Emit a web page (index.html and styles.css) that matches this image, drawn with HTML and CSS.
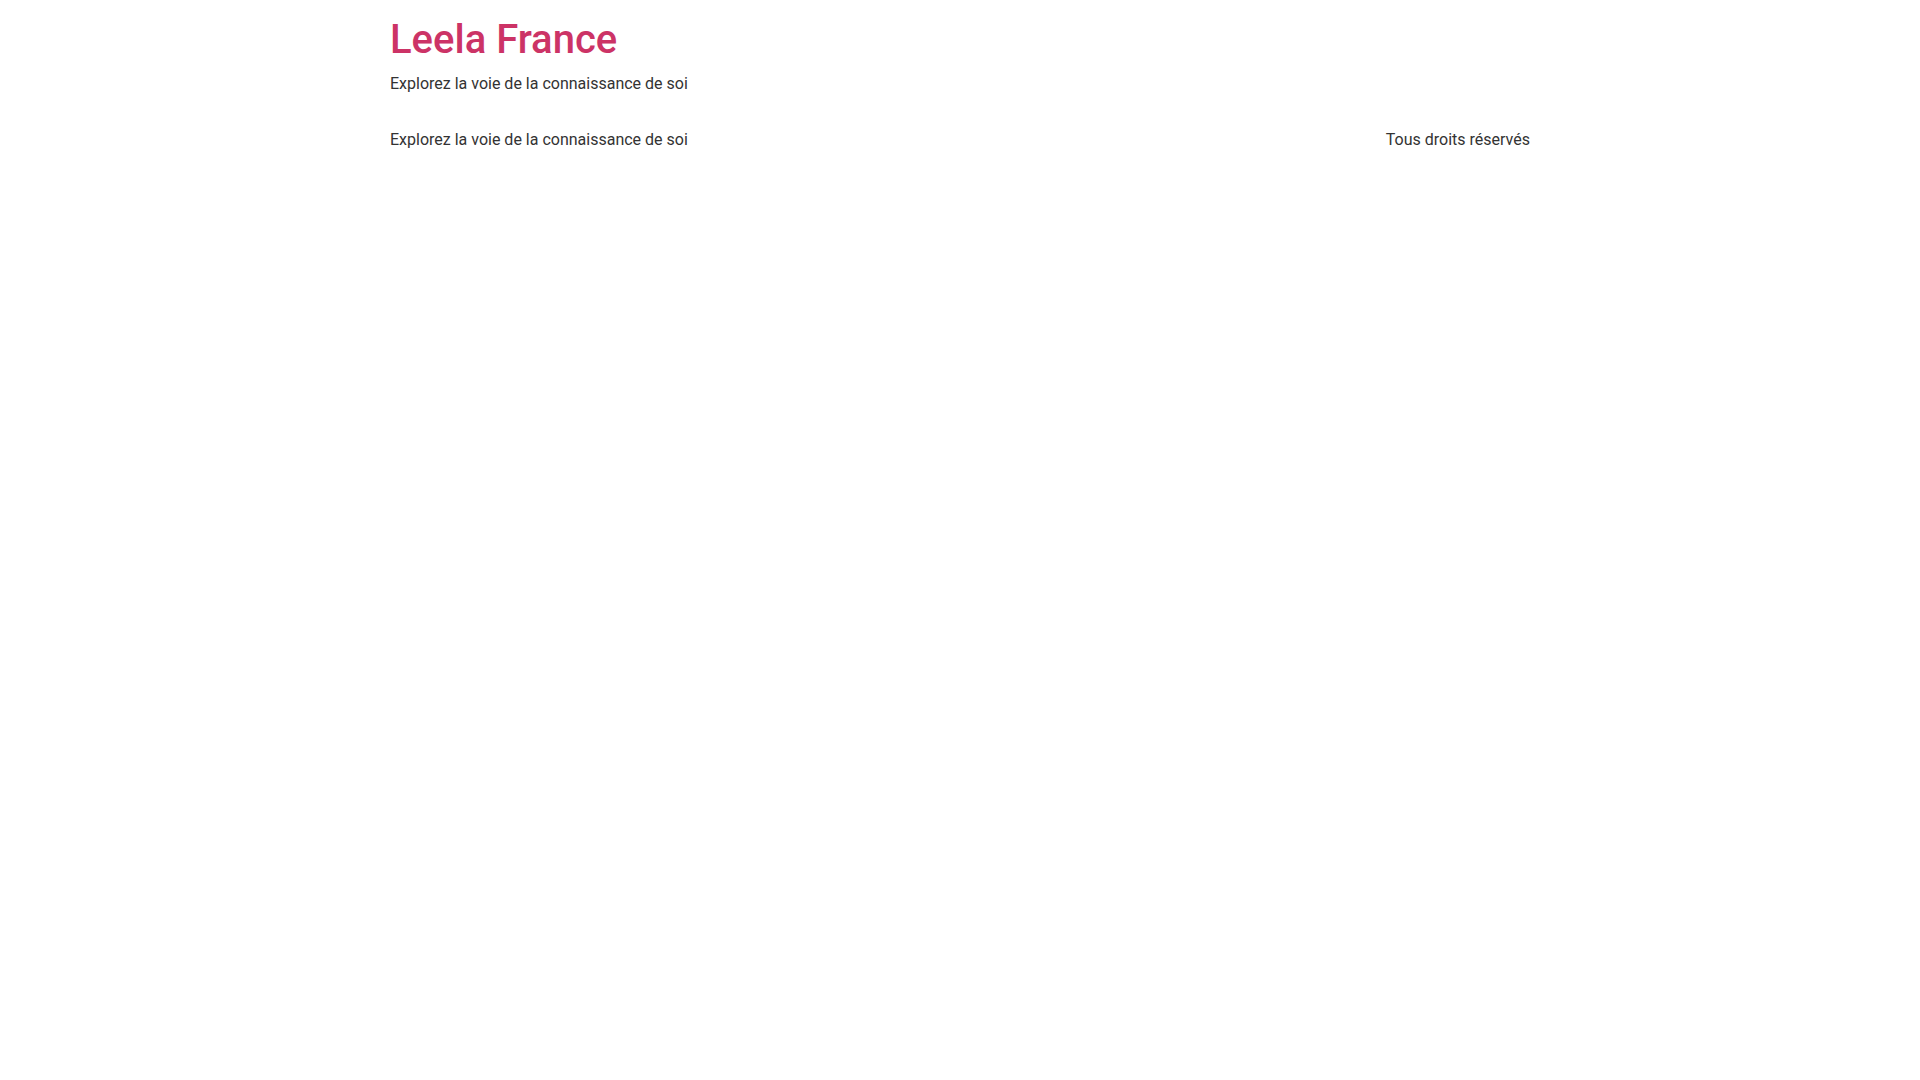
FILE: index.html
```html
<!DOCTYPE html>
<html lang="fr">
<head>
<meta charset="utf-8">
<meta name="viewport" content="width=device-width, initial-scale=1">
<title>Leela France</title>
<link rel="stylesheet" href="styles.css">
</head>
<body>
<header class="site-header">
  <div class="site-branding">
    <h1 class="site-title"><a href="#">Leela France</a></h1>
    <p class="site-description">Explorez la voie de la connaissance de soi</p>
  </div>
</header>
<footer class="site-footer">
  <p class="site-description">Explorez la voie de la connaissance de soi</p>
  <p class="copyright">Tous droits réservés</p>
</footer>
</body>
</html>
```

FILE: styles.css
```css
* {
  box-sizing: border-box;
}

body {
  margin: 0;
  background: #fff;
  color: #333;
  font-family: Roboto, "Liberation Sans", sans-serif;
  font-size: 16px;
  line-height: 24px;
}

.site-header,
.site-footer {
  display: flex;
  flex-wrap: wrap;
  justify-content: space-between;
  max-width: 1140px;
  margin: 0 auto;
  padding: 16px 0;
}

.site-title {
  margin: 0;
  font-size: 40px;
  font-weight: 500;
  line-height: 48px;
}

.site-title a {
  color: #c36;
  text-decoration: none;
}

.site-description,
.copyright {
  margin: 0;
}

.site-header .site-description {
  margin-top: 8px;
}

@media (max-width: 1139px) {
  .site-header,
  .site-footer {
    padding: 16px;
  }
}
```
